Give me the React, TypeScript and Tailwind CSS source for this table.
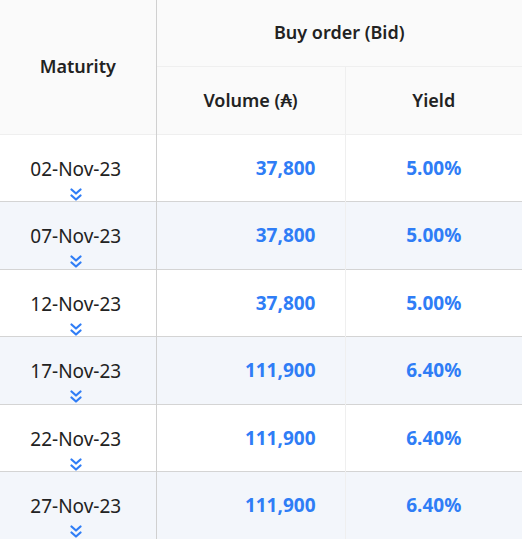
import React from "react";

const rows = [
  { date: "02-Nov-23", volume: "37,800", yieldPct: "5.00%" },
  { date: "07-Nov-23", volume: "37,800", yieldPct: "5.00%" },
  { date: "12-Nov-23", volume: "37,800", yieldPct: "5.00%" },
  { date: "17-Nov-23", volume: "111,900", yieldPct: "6.40%" },
  { date: "22-Nov-23", volume: "111,900", yieldPct: "6.40%" },
  { date: "27-Nov-23", volume: "111,900", yieldPct: "6.40%" },
];

const DoubleChevron = () => (
  <svg viewBox="0 0 12 13" className="h-[13px] w-[12px] text-[#2f7df6]" fill="none">
    <path d="M1.5 1.5 6 5.5 10.5 1.5" stroke="currentColor" strokeWidth={2.2} strokeLinecap="round" strokeLinejoin="round" />
    <path d="M1.5 7.5 6 11.5 10.5 7.5" stroke="currentColor" strokeWidth={2.2} strokeLinecap="round" strokeLinejoin="round" />
  </svg>
);

export default function App() {
  return (
    <div className="h-[539px] w-[522px] overflow-hidden bg-white font-['Noto_Sans',sans-serif] text-[#222]">
      <table className="w-[522px] table-fixed border-collapse">
        <colgroup>
          <col className="w-[156px]" />
          <col className="w-[189px]" />
          <col className="w-[177px]" />
        </colgroup>
        <thead className="bg-[#fafafa] text-[18px] font-semibold">
          <tr className="h-[66px]">
            <th rowSpan={2} className="border-r border-[#d0d0d0] text-center font-semibold">
              Maturity
            </th>
            <th colSpan={2} className="border-b border-[#efefef] text-center font-semibold">
              Buy order (Bid)
            </th>
          </tr>
          <tr className="h-[68px] border-b border-[#efefef]">
            <th className="border-r border-[#efefef] text-center font-semibold">Volume (₳)</th>
            <th className="text-center font-semibold">Yield</th>
          </tr>
        </thead>
        <tbody>
          {rows.map((row, idx) => (
            <tr
              key={row.date}
              className={`h-[67.5px] border-b border-[#d4d4d4] ${idx % 2 === 1 ? "bg-[#f3f6fb]" : "bg-white"}`}
            >
              <td className="border-r border-[#d0d0d0] pr-[4px] text-center align-top">
                <div className="flex flex-col items-center pt-[21px]">
                  <span className="text-[19px] leading-[26px]">{row.date}</span>
                  <div className="mt-[6px]">
                    <DoubleChevron />
                  </div>
                </div>
              </td>
              <td className="border-r border-[#efefef] pr-[29px] text-right text-[19px] font-bold text-[#2f7df6]">
                {row.volume}
              </td>
              <td className="text-center text-[19px] font-bold text-[#2f7df6]">{row.yieldPct}</td>
            </tr>
          ))}
        </tbody>
      </table>
    </div>
  );
}
